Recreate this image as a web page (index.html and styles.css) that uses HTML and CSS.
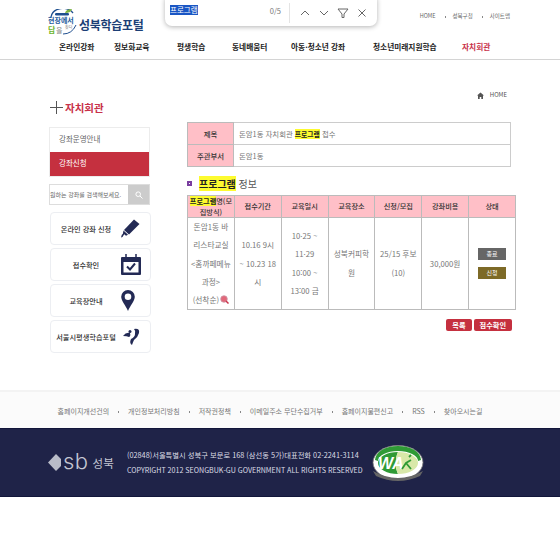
FILE: index.html
```html
<!DOCTYPE html>
<html lang="ko">
<head>
<meta charset="utf-8">
<title>성북학습포털</title>
<link rel="stylesheet" href="styles.css">
</head>
<body>
<header class="header">
  <div class="topbar">
    <a class="logo">
      <svg class="logo-mark" width="30" height="27" viewBox="0 0 30 27">
        <path d="M3 8 A12 10 0 0 1 25 4" fill="none" stroke="#1f4f8f" stroke-width="1.300"/>
        <path d="M17 4 q1-4 7-4 q-1 4-7 4z" fill="#7cb342"/>
        <rect x="7" y="4" width="14" height="2.500" rx="1.200" fill="#1f4f8f"/>
        <text x="0" y="13.500" class="logo-main">현장에서</text>
        <text x="0" y="24" class="logo-green">답</text>
        <text x="8" y="24" class="logo-gray">을</text>
        <text x="17" y="20" class="logo-small">찾다</text>
        <path d="M15 25 q9 0 13-9" fill="none" stroke="#1f4f8f" stroke-width="1"/>
      </svg>
      <span class="logo-text">성북학습포털</span>
    </a>
    <ul class="util">
      <li>HOME</li><li>성북구청</li><li>사이트맵</li>
    </ul>
  </div>
  <nav class="gnb">
    <a>온라인강좌</a><a>정보화교육</a><a>평생학습</a><a>동네배움터</a><a>아동·청소년 강좌</a><a>청소년미래지원학습</a><a class="on">자치회관</a>
  </nav>
</header>

<div class="findbar">
  <span class="find-q">프로그램</span>
  <span class="find-count">0/5</span>
  <span class="find-sep"></span>
  <svg class="find-ic" width="12" height="12" viewBox="0 0 12 12"><path d="M2 8l4-4 4 4" fill="none" stroke="#666" stroke-width="1"/></svg>
  <svg class="find-ic" width="12" height="12" viewBox="0 0 12 12"><path d="M2 4l4 4 4-4" fill="none" stroke="#666" stroke-width="1"/></svg>
  <svg class="find-ic" width="12" height="12" viewBox="0 0 12 12"><path d="M1 2h10L7 7v3.500H5V7z" fill="none" stroke="#666" stroke-width="1"/></svg>
  <svg class="find-ic" width="12" height="12" viewBox="0 0 12 12"><path d="M2.500 2.500l7 7M9.500 2.500l-7 7" fill="none" stroke="#666" stroke-width="1"/></svg>
</div>

<main class="content">
  <aside class="side">
    <h2 class="side-title"><svg width="13" height="13" viewBox="0 0 13 13"><path d="M6.500 0v13M0 6.500h13" stroke="#555" stroke-width="1"/></svg>자치회관</h2>
    <ul class="side-menu">
      <li>강좌운영안내</li>
      <li class="on">강좌신청</li>
    </ul>
    <div class="side-search">
      <span class="search-input">원하는 강좌를 검색해보세요.</span>
      <span class="search-btn"><svg width="8" height="8" viewBox="0 0 8 8"><circle cx="3.200" cy="3.200" r="2.300" fill="none" stroke="#fff" stroke-width="1"/><path d="M5 5l2.500 2.500" stroke="#fff" stroke-width="1"/></svg></span>
    </div>
    <a class="quick">
      <span>온라인 강좌 신청</span>
      <svg width="19" height="19" viewBox="0 0 19 19"><path d="M13 .5L18.500 5 8 15.500 3 11z" fill="#232a55"/><path d="M2.500 11.500l4.500 4.300-2 1-1.800-1.600L1.500 18 0 18.500l.8-2.700 1-.8z" fill="#232a55"/></svg>
    </a>
    <a class="quick">
      <span>접수확인</span>
      <svg width="20" height="21" viewBox="0 0 20 21"><path d="M1 3h18a1 1 0 0 1 1 1v16a1 1 0 0 1-1 1H1a1 1 0 0 1-1-1V4a1 1 0 0 1 1-1z" fill="#232a55"/><path d="M5 0v4M15 0v4" stroke="#232a55" stroke-width="1.500"/><path d="M2.500 8h15v10.500h-15z" fill="#fff"/><path d="M6 12.500l3 3 5-6" fill="none" stroke="#232a55" stroke-width="2"/></svg>
    </a>
    <a class="quick">
      <span>교육장안내</span>
      <svg width="14" height="21" viewBox="0 0 14 21"><path d="M7 0a6.800 6.800 0 0 1 6.800 6.800C13.800 11 9 16 7 21 5 16 .2 11 .2 6.800A6.800 6.800 0 0 1 7 0z" fill="#232a55"/><circle cx="7" cy="6.800" r="3.300" fill="#fff"/></svg>
    </a>
    <a class="quick">
      <span>서울시평생학습포털</span>
      <svg class="seoul" width="17" height="17" viewBox="0 0 17 17"><path d="M11 1q6-1 5 4-1 4-5 7-1 2-2 5-3-2-1-6 4-2 4-5 1-3-1-5z" fill="#232a55"/><circle cx="7" cy="3.500" r="1.500" fill="#232a55"/><path d="M0 8q3-4 7-3 1 3-1 4-2-1-6-1z" fill="#232a55"/></svg>
    </a>
  </aside>

  <section class="main">
    <div class="crumb"><svg width="7" height="7" viewBox="0 0 7 7"><path d="M3.500 .5L7 3.500H6V7H4.300V5H2.700V7H1V3.500H0z" fill="#555"/></svg>HOME</div>
    <table class="info">
      <tr><th>제목</th><td>돈암1동 자치회관 <mark>프로그램</mark> 접수</td></tr>
      <tr><th>주관부서</th><td>돈암1동</td></tr>
    </table>
    <h3 class="sec"><i class="bullet"></i><span><mark>프로그램</mark> 정보</span></h3>
    <table class="prog">
      <tr>
        <th><mark>프로그램</mark>명(모<br>집방식)</th><th>접수기간</th><th>교육일시</th><th>교육장소</th><th>신청/모집</th><th>강좌비용</th><th>상태</th>
      </tr>
      <tr>
        <td>돈암1동 바<br>리스타교실<br>&lt;홈까페메뉴<br>과정&gt;<br>(선착순)<svg class="mag" width="9" height="9" viewBox="0 0 9 9"><circle cx="4" cy="4" r="3.300" fill="#e2687a" stroke="#c9a" stroke-width=".8"/><path d="M6 6l2.500 2.500" stroke="#c8324a" stroke-width="1.500"/></svg></td>
        <td>10.16 9시<br>~ 10.23 18<br>시</td>
        <td>10·25 ~<br>11·29<br>10:00 ~<br>13:00 금</td>
        <td>성북커피학<br>원</td>
        <td>25/15 후보<br>(10)</td>
        <td>30,000원</td>
        <td class="state"><span class="st end">종료</span><span class="st apply">신청</span></td>
      </tr>
    </table>
    <div class="actions"><a class="btn">목록</a><a class="btn">접수확인</a></div>
  </section>
</main>

<footer>
  <ul class="flinks">
    <li>홈페이지개선건의</li><li>개인정보처리방침</li><li>저작권정책</li><li>이메일주소 무단수집거부</li><li>홈페이지불편신고</li><li>RSS</li><li>찾아오시는길</li>
  </ul>
  <div class="fbar">
    <div class="fbrand">
      <svg width="13" height="17" viewBox="0 0 13 17"><path d="M8 0L0 8.500 8 17l5-5V5z" fill="#b9bcc8"/></svg>
      <span class="sb">sb</span><span class="sb-kr">성북</span>
    </div>
    <div class="faddr">
      <p class="addr">(02848)서울특별시 성북구 보문로 168 (삼선동 5가)대표전화 02-2241-3114</p>
      <p>COPYRIGHT 2012 SEONGBUK-GU GOVERNMENT ALL RIGHTS RESERVED</p>
    </div>
    <svg class="wa" width="52" height="38" viewBox="0 0 52 38">
      <ellipse cx="26" cy="17.500" rx="25" ry="17" fill="#fff" stroke="#777" stroke-width=".8"/>
      <path d="M3 15a23 14 0 0 1 46 0l-3 1a20 10 0 0 0-40 0z" fill="#2f9a35"/>
      <ellipse cx="26" cy="18" rx="20" ry="11" fill="#fff"/>
      <path d="M26 7a20 11 0 0 0 0 22c-3-6-3-16 0-22z" fill="#2f9a35"/>
      <path d="M26 7a20 11 0 0 1 20 11 20 11 0 0 1-20 11c-3-6-3-16 0-22z" fill="#d8e8a8"/>
      <text x="6" y="24" class="wa-t">WA</text>
      <path d="M30 24l4-6 5-3M34 18l5 6M37 12l2-2" stroke="#2f9a35" stroke-width="1.800" fill="none"/>
      <path d="M1 26q25 14 50 0l-3 5q-22 10-44 0z" fill="#666"/>
    </svg>
  </div>
</footer>
</body>
</html>
```
FILE: styles.css
```css
* { box-sizing: border-box; }
html, body { margin: 0; padding: 0; background: #fff; }
body { font-family: "Noto Sans CJK KR", "Noto Sans", sans-serif; color: #666; position: relative; height: 553px; overflow: hidden; }
ul { list-style: none; margin: 0; padding: 0; }
p, h2, h3 { margin: 0; }

.header { height: 60px; border-bottom: 1px solid #d4d4d4; padding: 0 48px; }
.topbar { height: 38px; display: flex; justify-content: space-between; }
.logo { display: flex; align-items: center; margin-top: 9px; height: 27px; gap: 1px; }
.logo-mark { display: block; }
.logo-main { font-size: 7px; font-weight: 700; fill: #1d5a9b; }
.logo-green { font-size: 8px; font-weight: 700; fill: #6fb52c; }
.logo-gray { font-size: 7px; fill: #888; }
.logo-small { font-size: 4px; fill: #888; }
.logo-text { font-size: 12px; font-weight: 700; color: #1c3f76; letter-spacing: -.3px; margin-top: 3px; }
.util { display: flex; gap: 17px; font-size: 5.500px; color: #666; margin-top: 12px; height: 10px; line-height: 8px; padding-right: 2px; }
.util li + li { position: relative; }
.util li + li::before { content: ""; position: absolute; left: -8px; top: 4px; width: 1px; height: 2px; background: #888; }
.gnb { display: grid; grid-template-columns: 55px 63px 55px 59px 82px 89px 30px; padding-left: 11px; font-size: 7.700px; font-weight: 700; color: #222; line-height: 18px; white-space: nowrap; }
.gnb .on { color: #c8324a; }

.findbar { position: absolute; left: 165px; top: -6px; width: 212px; height: 32px; background: #fff; border-radius: 7px; box-shadow: 0 1px 5px rgba(0,0,0,.3); display: flex; align-items: center; padding: 6px 9px 0 5px; font-size: 8px; }
.find-q { background: #1a56c4; color: #fff; font-size: 7.500px; line-height: 10px; margin-top: -6px; }
.find-count { margin-left: auto; margin-right: 8px; color: #777; font-size: 7.500px; margin-top: -6px; }
.find-sep { width: 1px; height: 20px; background: #e4e4e4; margin-right: 9px; }
.find-ic { margin-right: 7px; flex: none; }
.find-ic:last-child { margin-right: 0; }

.content { display: flex; padding: 0 48px; gap: 36px; height: 330px; }
.side { width: 103px; flex: none; padding-top: 40px; }
.side-title { display: flex; align-items: center; gap: 2px; font-size: 10.500px; line-height: 15px; color: #c8324a; font-weight: 700; margin-left: 2px; }
.side-menu { margin: 12px 1px 0 1px; border: 1px solid #ececec; font-size: 7.500px; }
.side-menu li { height: 24px; line-height: 22px; padding-left: 9px; color: #666; }
.side-menu li.on { background: #c5303f; color: #fff; }
.side-search { display: flex; height: 21px; margin: 7px 1px 0 1px; border: 1px solid #ddd; }
.search-input { flex: 1; font-size: 6px; line-height: 19px; overflow: hidden; white-space: nowrap; color: #666; }
.search-btn { width: 21px; background: #ccc; display: flex; align-items: center; justify-content: center; }
.quick { display: grid; grid-template-columns: 70px auto; align-items: center; height: 33px; margin: 0 0 3px 2px; width: 101px; border: 1px solid #eceef2; border-radius: 4px; font-size: 7.200px; color: #333; font-weight: 500; }
.quick span { white-space: nowrap; text-align: center; }
.quick svg { display: block; }
.quick .seoul { margin-left: 2px; }
.side-search + .quick { margin-top: 7px; }

.main { flex: 1; min-width: 0; padding-top: 30px; }
.crumb { display: flex; align-items: center; justify-content: flex-end; gap: 6px; font-size: 6px; color: #555; line-height: 10px; padding-right: 5px; margin-bottom: 22px; }
mark { background: #fdfb30; color: #222; font-weight: 700; }
.info { width: 324px; border-collapse: collapse; border: 1px solid #aaa; font-size: 7.400px; }
.info mark { font-size: 6.800px; }
.info th { width: 46px; background: #ffbfc7; color: #333; font-weight: 500; border: 1px solid #bbb; height: 22px; padding: 0; }
.info td { border: 1px solid #ccc; padding: 0 5px; color: #777; }
.sec { display: flex; align-items: center; gap: 7px; font-size: 10px; font-weight: 400; color: #555; line-height: 15px; margin-top: 9px; }
.bullet { width: 5px; height: 5px; border: 1px solid #7a3ea0; background: #fff; box-shadow: inset 0 0 0 1px #7a3ea0; }
.prog { width: 329px; margin-top: 4px; table-layout: fixed; border-collapse: collapse; font-size: 7.700px; }
.prog th { background: #ffbfc7; color: #333; font-weight: 500; border: 1px solid #bbb; height: 21px; line-height: 10.500px; padding: 0; font-size: 7.200px; white-space: nowrap; }
.prog td { border: 1px solid #bbb; text-align: center; color: #777; line-height: 18.300px; padding: 0; height: 92px; white-space: nowrap; }
.mag { vertical-align: -1px; margin-left: 1px; }
.state { padding: 0 !important; }
.st { display: block; width: 28px; height: 12px; margin: 0 auto 7px; font-size: 6px; line-height: 12px; color: #fff; }
.st.end { background: #666; }
.st.apply { background: #7d6a27; margin-bottom: 0; }
.actions { display: flex; justify-content: flex-end; gap: 2px; margin-top: 9px; }
.btn { height: 12px; line-height: 12px; padding: 0 6px; background: #c5303f; color: #fff; font-size: 7.200px; font-weight: 700; border-radius: 2px; }

footer { position: relative; }
.flinks { height: 38px; border-top: 2px solid #f3f3f3; background: #fbfbfb; display: flex; justify-content: center; gap: 19px; align-items: center; font-size: 7px; color: #777; padding: 2px 20px 0 0; }
.flinks li { white-space: nowrap; position: relative; }
.flinks li + li::before { content: ""; position: absolute; left: -10px; top: 50%; width: 1px; height: 2px; background: #888; }
.fbar { height: 69px; background: #1f2348; border-top: 1px solid #12163a; border-bottom: 1px solid #12163a; display: flex; align-items: center; padding-left: 48px; color: #dcdde6; }
.fbrand { display: flex; align-items: center; width: 79px; flex: none; gap: 2px; color: #c4c6d2; }
.sb { font-family: "Inter", sans-serif; font-weight: 300; font-size: 22px; line-height: 20px; margin-top: -3px; letter-spacing: .5px; }
.sb-kr { font-size: 11.500px; margin-left: 2px; }
.faddr { font-size: 7.100px; line-height: 15px; white-space: nowrap; width: 245px; }
.addr { font-size: 7.300px; }
.wa { flex: none; margin-top: 3px; }
.wa-t { font-family: "Liberation Sans", sans-serif; font-size: 16px; font-weight: 700; font-style: italic; fill: #fff; }
```
